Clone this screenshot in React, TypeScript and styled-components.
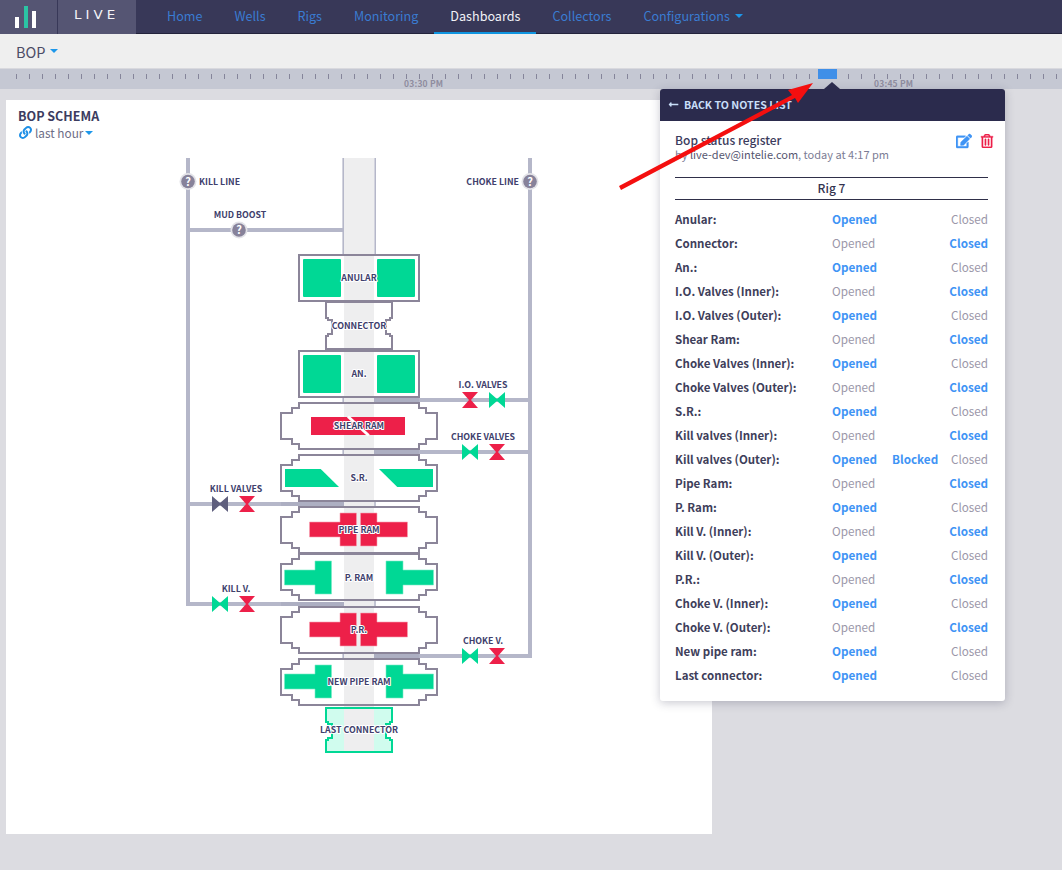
import React from 'react';
import styled, { createGlobalStyle } from 'styled-components';
import { FaLink, FaEdit, FaRegTrashAlt, FaLongArrowAltLeft } from 'react-icons/fa';

const FONT = `"Noto Sans CJK SC", "Noto Sans", sans-serif`;
const RED = '#ed2049';
const GREEN = '#00d895';
const PIPE = '#b5b7c9';
const LINE = '#8b8599';
const BLUE = '#3f94f5';

const Global = createGlobalStyle`
  html, body { margin: 0; padding: 0; background: #dcdce1; }
  body { font-family: ${FONT}; overflow: hidden; }
  * { box-sizing: border-box; }
`;

const Page = styled.div`
  position: relative;
  width: 1062px;
  height: 870px;
  display: flex;
  flex-direction: column;
  overflow: hidden;
`;

const Nav = styled.nav`
  height: 34px;
  flex: none;
  display: flex;
  background: #383858;
  border-bottom: 1px solid #23233c;
`;

const Brand = styled.div`
  width: 136px;
  height: 34px;
  display: flex;
  background: #555573;
`;

const BrandMark = styled.div`
  width: 58px;
  border-right: 1px solid #383858;
  padding: 6px 0 0 14px;
`;

const BrandName = styled.div`
  flex: 1;
  padding-left: 16px;
  font: 400 12px/31px "DejaVu Sans", sans-serif;
  letter-spacing: 3.6px;
  color: #f4f4f8;
  transform: scaleX(1.12);
  transform-origin: 16px 0;
`;

const NavList = styled.div`
  display: flex;
  padding-left: 15px;
`;

const NavItem = styled.div<{ $active?: boolean }>`
  height: 34px;
  padding: 0 16px;
  font-size: 12.6px;
  line-height: 32px;
  color: ${p => (p.$active ? '#f2f2f6' : '#3a7cd2')};
  border-bottom: 2px solid ${p => (p.$active ? '#0f95e0' : 'transparent')};
  display: flex;
  align-items: center;
  gap: 5px;
`;

const Caret = styled.span<{ $size?: number }>`
  display: inline-block;
  width: 0;
  height: 0;
  border-left: ${p => p.$size ?? 4}px solid transparent;
  border-right: ${p => p.$size ?? 4}px solid transparent;
  border-top: ${p => p.$size ?? 4}px solid #1d97ea;
`;

const SubHeader = styled.div`
  height: 35px;
  flex: none;
  background: #efefef;
  border-bottom: 1px solid #d9d9de;
  padding-left: 16px;
  display: flex;
  align-items: center;
  gap: 5px;
  font-size: 14.5px;
  color: #4c4c66;
`;

const Timeline = styled.div`
  position: relative;
  height: 20px;
  flex: none;
  background: #c5c8d3;
`;

const Ticks = styled.svg`
  display: block;
`;

const TimeLabel = styled.span<{ $x: number }>`
  position: absolute;
  left: ${p => p.$x}px;
  top: 8px;
  font-size: 8.5px;
  line-height: 12px;
  font-weight: 700;
  letter-spacing: 0.2px;
  color: #8f8d9f;
`;

const Marker = styled.div`
  position: absolute;
  left: 818px;
  top: 0;
  width: 19px;
  height: 10px;
  background: #3f8fe8;
`;

const Main = styled.main`
  flex: 1;
  padding: 11px 6px 36px;
`;

const Card = styled.section`
  width: 706px;
  height: 734px;
  background: #fff;
  padding: 7px 12px 0;
`;

const CardTitle = styled.h2`
  margin: 0;
  font-size: 12.5px;
  line-height: 17px;
  font-weight: 700;
  color: #3c3c60;
`;

const Period = styled.div`
  display: flex;
  align-items: center;
  height: 17px;
  font-size: 11.8px;
  color: #6d6d86;
  gap: 2px;
  svg { color: #1d8fe6; margin: 0 1px 0 1px; }
`;

const Schema = styled.svg`
  display: block;
  margin: 9px 0 0 152px;
  text {
    font-family: ${FONT};
    font-size: 8.8px;
    font-weight: 600;
    fill: #40406c;
  }
`;

const Halo = styled.text`
  paint-order: stroke;
  stroke: #fff;
  stroke-width: 2px;
  stroke-linejoin: round;
`;

const Panel = styled.aside`
  position: absolute;
  left: 660px;
  top: 89px;
  width: 345px;
  height: 612px;
  background: #fff;
  box-shadow: 0 2px 10px rgba(40, 40, 70, 0.25);
  border-radius: 3px;
`;

const Notch = styled.div`
  position: absolute;
  left: 164px;
  top: -7px;
  border-left: 8px solid transparent;
  border-right: 8px solid transparent;
  border-bottom: 7px solid #2b2b4d;
`;

const PanelHead = styled.header`
  height: 32px;
  padding: 0 0 2px 8px;
  background: #2b2b4d;
  border-radius: 3px 3px 0 0;
  display: flex;
  align-items: center;
  gap: 5px;
  font-size: 10.6px;
  font-weight: 700;
  color: #c8def8;
`;

const PanelBody = styled.div`
  padding: 11px 17px 0 15px;
`;

const NoteHead = styled.div`
  display: flex;
  justify-content: space-between;
  height: 45px;
`;

const NoteTitle = styled.div`
  font-size: 12px;
  line-height: 16px;
  font-weight: 500;
  color: #3b3b5c;
`;

const NoteMeta = styled.div`
  font-size: 11px;
  line-height: 13px;
  color: #7c7c94;
  b { font-weight: 400; color: #55556f; }
`;

const NoteActions = styled.div`
  display: flex;
  gap: 8px;
  padding-top: 1px;
  margin-right: -6px;
  svg { stroke: currentColor; stroke-width: 12px; }
`;

const RigName = styled.div`
  height: 23px;
  border-top: 1px solid #2f2f49;
  border-bottom: 1px solid #2f2f49;
  text-align: center;
  font-size: 12px;
  line-height: 19px;
  font-weight: 500;
  color: #33334f;
  margin-bottom: 7px;
`;

const Row = styled.div`
  display: grid;
  grid-template-columns: 157px 60px 1fr auto;
  height: 24px;
  align-items: center;
  font-size: 11.7px;
  line-height: 22px;
`;

const RowLabel = styled.span`
  font-size: 11.5px;
  font-weight: 600;
  color: #3e3e5a;
`;

const State = styled.span<{ $on?: boolean }>`
  font-weight: ${p => (p.$on ? 700 : 400)};
  color: ${p => (p.$on ? BLUE : '#9b97a9')};
`;

const Overlay = styled.svg`
  position: absolute;
  left: 0;
  top: 0;
  pointer-events: none;
`;

type Rec = { l: string; s: 'o' | 'c'; b?: boolean };
const rows: Rec[] = [
  { l: 'Anular:', s: 'o' }, { l: 'Connector:', s: 'c' }, { l: 'An.:', s: 'o' },
  { l: 'I.O. Valves (Inner):', s: 'c' }, { l: 'I.O. Valves (Outer):', s: 'o' },
  { l: 'Shear Ram:', s: 'c' }, { l: 'Choke Valves (Inner):', s: 'o' },
  { l: 'Choke Valves (Outer):', s: 'c' }, { l: 'S.R.:', s: 'o' },
  { l: 'Kill valves (Inner):', s: 'c' }, { l: 'Kill valves (Outer):', s: 'o', b: true },
  { l: 'Pipe Ram:', s: 'c' }, { l: 'P. Ram:', s: 'o' }, { l: 'Kill V. (Inner):', s: 'c' },
  { l: 'Kill V. (Outer):', s: 'o' }, { l: 'P.R.:', s: 'c' }, { l: 'Choke V. (Inner):', s: 'o' },
  { l: 'Choke V. (Outer):', s: 'c' }, { l: 'New pipe ram:', s: 'o' }, { l: 'Last connector:', s: 'o' },
];

const navItems = ['Home', 'Wells', 'Rigs', 'Monitoring', 'Dashboards', 'Collectors'];

const ramPoints = (y: number) => {
  const l = [[299, 0], [299, 5], [292, 5], [292, 10], [281, 10], [281, 36], [292, 36], [292, 41], [299, 41], [299, 46]];
  const r = [...l].reverse().map(([x, d]) => [718 - x, d]);
  return [...l, ...r].map(([x, d]) => `${x},${y + d}`).join(' ');
};

const connPoints = (y: number, h: number) => {
  const m = Math.round(h / 2);
  const l = [[326, 0], [326, m - 8], [328, m - 8], [328, m - 6], [332, m - 6], [332, m + 8], [328, m + 8], [328, m + 10], [326, m + 10], [326, h]];
  const r = [...l].reverse().map(([x, d]) => [718 - x, d]);
  return [...l, ...r].map(([x, d]) => `${x},${y + d}`).join(' ');
};

const Bow = ({ x, y, fill }: { x: number; y: number; fill: string }) => (
  <polygon points={`${x - 8},${y - 8} ${x},${y - 1} ${x + 8},${y - 8} ${x + 8},${y + 8} ${x},${y + 1} ${x - 8},${y + 8}`} fill={fill} />
);
const Hour = ({ x, y, fill }: { x: number; y: number; fill: string }) => (
  <polygon points={`${x - 8},${y - 8} ${x + 8},${y - 8} ${x + 1},${y} ${x + 8},${y + 8} ${x - 8},${y + 8} ${x - 1},${y}`} fill={fill} />
);

const Help = ({ x, y }: { x: number; y: number }) => (
  <g>
    <circle cx={x} cy={y} r={8.5} fill="#e3e3e8" />
    <circle cx={x} cy={y} r={6.8} fill="#87829a" />
    <text x={x} y={y + 4} textAnchor="middle" style={{ fontSize: 11, fontWeight: 700, fill: '#fff' }}>?</text>
  </g>
);

const Cross = ({ y, fill }: { y: number; fill: string }) => {
  const red = fill === RED;
  const [outer, mid, inner] = red ? [309.5, 340, 356.5] : [284.5, 315, 331.5];
  const o2 = red ? 407.5 : 433.5;
  const m2 = red ? 377 : 403;
  const i2 = red ? 360.5 : 386;
  return (
    <g fill={fill} stroke={red ? '#f7a3b4' : '#7aebc8'} strokeWidth={0.6}>
      <polygon points={`${outer},${y + 15} ${mid},${y + 15} ${mid},${y + 6} ${inner},${y + 6} ${inner},${y + 39} ${mid},${y + 39} ${mid},${y + 30} ${outer},${y + 30}`} />
      <polygon points={`${o2},${y + 15} ${m2},${y + 15} ${m2},${y + 6} ${i2},${y + 6} ${i2},${y + 39} ${m2},${y + 39} ${m2},${y + 30} ${o2},${y + 30}`} />
    </g>
  );
};

const Label = ({ x, y, a = 'middle', children }: { x: number; y: number; a?: 'middle' | 'start' | 'end'; children: string }) => (
  <Halo x={x} y={y + 3.5} textAnchor={a}>{children}</Halo>
);

const ramTops = [403, 455, 507, 554, 607, 659];

const BopSchema = () => (
  <Schema width={400} height={620} viewBox="170 150 400 620">
    {/* outer pipes */}
    <g fill="none" stroke={PIPE} strokeWidth={4}>
      <path d="M188 158 V604 H344" />
      <path d="M530 158 V656 H374" />
      <path d="M188 230 H343" />
      <path d="M374 400 H530" />
      <path d="M374 452 H530" />
      <path d="M188 504 H344" />
    </g>
    {/* bodies */}
    <rect x={299} y={255} width={120} height={46} fill="#fff" />
    <polygon points={connPoints(302, 47)} fill="#fff" />
    <rect x={299} y={351} width={120} height={46} fill="#fff" />
    {ramTops.map(y => <polygon key={y} points={ramPoints(y)} fill="#fff" />)}
    <polygon points={connPoints(708, 44)} fill="#d0fcee" />
    {/* well bore */}
    <rect x={344} y={158} width={30} height={595} fill="#eeeeef" />
    <path d="M343.2 158 V254 M375.2 158 V254 M343.2 397 V403 M343.2 449 V455 M375 501 V507 M343.2 653 V659 M375 600 V607" stroke={PIPE} strokeWidth={1.6} fill="none" />
    <path d="M374 400 H419 M374 452 H419 M344 504 H281 M344 604 H281 M374 656 H419" stroke="#adafc2" strokeWidth={4} fill="none" />
    {/* outlines */}
    <g fill="none" stroke={LINE} strokeWidth={2}>
      <rect x={299} y={255} width={120} height={46} />
      <polygon points={connPoints(302, 47)} />
      <rect x={299} y={351} width={120} height={46} />
      {ramTops.map(y => <polygon key={y} points={ramPoints(y)} />)}
    </g>
    <polygon points={connPoints(708, 44)} fill="none" stroke={GREEN} strokeWidth={2} />
    {/* rams */}
    <g fill={GREEN}>
      <rect x={303} y={259} width={38} height={38} rx={1} />
      <rect x={377} y={259} width={38} height={38} rx={1} />
      <rect x={303} y={355} width={38} height={38} rx={1} />
      <rect x={377} y={355} width={38} height={38} rx={1} />
      <polygon points="285,469 320.7,469 339,487 285,487" />
      <polygon points="379,469 433,469 433,487 397.3,487" />
    </g>
    <rect x={311} y={417} width={94} height={18} fill={RED} />
    <path d="M348 416.5 L368.7 435.5" stroke="#fff" strokeWidth={3} />
    <Cross y={507} fill={RED} />
    <Cross y={555} fill={GREEN} />
    <Cross y={607} fill={RED} />
    <Cross y={659} fill={GREEN} />
    {/* valves */}
    <Hour x={470} y={400} fill={RED} />
    <Bow x={497} y={400} fill={GREEN} />
    <Bow x={470} y={452} fill={GREEN} />
    <Hour x={497} y={452} fill={RED} />
    <Bow x={220} y={504} fill="#5f5f7e" />
    <Hour x={247} y={504} fill={RED} />
    <Bow x={220} y={604} fill={GREEN} />
    <Hour x={247} y={604} fill={RED} />
    <Bow x={470} y={656} fill={GREEN} />
    <Hour x={497} y={656} fill={RED} />
    <Help x={188} y={181.5} />
    <Help x={530} y={181.5} />
    <Help x={239} y={230} />
    {/* labels */}
    <Label x={199} y={181.5} a="start">KILL LINE</Label>
    <Label x={519} y={181.5} a="end">CHOKE LINE</Label>
    <Label x={240} y={214.5}>MUD BOOST</Label>
    <Label x={359} y={277.5}>ANULAR</Label>
    <Label x={359} y={325}>CONNECTOR</Label>
    <Label x={359} y={373}>AN.</Label>
    <Label x={483} y={384.5}>I.O. VALVES</Label>
    <Label x={359} y={425.5}>SHEAR RAM</Label>
    <Label x={483} y={436.5}>CHOKE VALVES</Label>
    <Label x={359} y={477.5}>S.R.</Label>
    <Label x={236} y={488.5}>KILL VALVES</Label>
    <Label x={359} y={529}>PIPE RAM</Label>
    <Label x={359} y={577}>P. RAM</Label>
    <Label x={236} y={588.5}>KILL V.</Label>
    <Label x={359} y={629}>P.R.</Label>
    <Label x={483} y={640.5}>CHOKE V.</Label>
    <Label x={359} y={681}>NEW PIPE RAM</Label>
    <Label x={359} y={729}>LAST CONNECTOR</Label>
  </Schema>
);

export default function App() {
  const ticks = Array.from({ length: 81 }, (_, i) => 16 + i * 13);
  return (
    <Page>
      <Global />
      <Nav>
        <Brand>
          <BrandMark>
            <svg width="24" height="22" viewBox="0 0 24 22" style={{ display: 'block' }}>
              <rect x="1" y="11" width="4" height="11" fill="#fff" />
              <rect x="10" y="0" width="4" height="22" fill="#2bc4a4" />
              <rect x="18" y="5" width="4" height="17" fill="#fff" />
            </svg>
          </BrandMark>
          <BrandName>LIVE</BrandName>
        </Brand>
        <NavList>
          {navItems.map(n => <NavItem key={n} $active={n === 'Dashboards'}>{n}</NavItem>)}
          <NavItem>Configurations <Caret /></NavItem>
        </NavList>
      </Nav>
      <SubHeader>BOP <Caret /></SubHeader>
      <Timeline>
        <Ticks width={1062} height={20}>
          {ticks.map(x => <rect key={x} x={x} y={5} width={1} height={5} fill="#85859a" />)}
        </Ticks>
        <TimeLabel $x={404}>03:30 PM</TimeLabel>
        <TimeLabel $x={874}>03:45 PM</TimeLabel>
        <Marker />
      </Timeline>
      <Main>
        <Card>
          <CardTitle>BOP SCHEMA</CardTitle>
          <Period><FaLink size={13} /> last hour <Caret /></Period>
          <BopSchema />
        </Card>
      </Main>
      <Panel>
        <Notch />
        <PanelHead><FaLongArrowAltLeft size={11} /> BACK TO NOTES LIST</PanelHead>
        <PanelBody>
          <NoteHead>
            <div>
              <NoteTitle>Bop status register</NoteTitle>
              <NoteMeta>by <b>live-dev@intelie.com</b>, today at 4:17 pm</NoteMeta>
            </div>
            <NoteActions>
              <FaEdit size={16} color={BLUE} />
              <FaRegTrashAlt size={14} color={RED} style={{ marginTop: 1 }} />
            </NoteActions>
          </NoteHead>
          <RigName>Rig 7</RigName>
          {rows.map(r => (
            <Row key={r.l}>
              <RowLabel>{r.l}</RowLabel>
              <State $on={r.s === 'o'}>Opened</State>
              <span>{r.b ? <State $on>Blocked</State> : null}</span>
              <State $on={r.s === 'c'}>Closed</State>
            </Row>
          ))}
        </PanelBody>
      </Panel>
      <Overlay width={1062} height={870}>
        <polygon points="813,83 788,90 792,95 619,186 621,190 795,98 798,103" fill="#f40f0f" />
      </Overlay>
    </Page>
  );
}
